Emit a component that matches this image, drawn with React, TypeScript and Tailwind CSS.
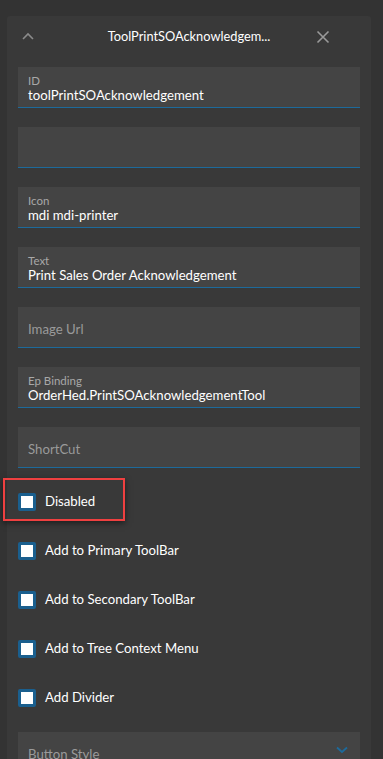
import React from "react";

const font = { fontFamily: "Lato, 'Noto Sans', sans-serif" };

function Field({ label, value, placeholder }: { label?: string; value?: string; placeholder?: string }) {
  return (
    <div className="h-[41px] bg-[#444444] border-b border-[#1d6a9b] pl-[10px] pr-[10px] flex flex-col">
      {label ? (
        <div className="flex flex-col pt-[7px]">
          <span className="text-[11.5px] leading-[13px] text-[#a8a8a8]">{label}</span>
          <span className="text-[13.2px] leading-[17px] text-white">{value}</span>
        </div>
      ) : placeholder ? (
        <span className="text-[13.2px] leading-[18px] text-[#9a9a9a] mt-[13px]">{placeholder}</span>
      ) : null}
    </div>
  );
}

function Check({ label }: { label: string }) {
  return (
    <div className="h-[49px] flex items-center">
      <div className="w-[18px] h-[18px] border-[3px] border-[#1a5f8e] bg-white rounded-[2px]" />
      <span className="ml-[9px] text-[13.2px] text-white">{label}</span>
    </div>
  );
}

export default function App() {
  return (
    <div className="w-[383px] h-[759px] bg-[#333333] overflow-hidden relative" style={font}>
      <div className="pl-[7px] pt-[16px]">
        <div className="w-[364px] h-[760px] bg-[#393939] rounded-[3px] px-[11px]">
          <div className="h-[42px] grid grid-cols-[50px_1fr_50px] items-center">
            <div className="flex justify-start pl-[3px]">
              <svg width="14" height="14" viewBox="0 0 14 14">
                <path d="M2 9 L7 4 L12 9" fill="none" stroke="#8a8a8a" strokeWidth="1.6" />
              </svg>
            </div>
            <div className="text-center text-[12.8px] text-white whitespace-nowrap">ToolPrintSOAcknowledgem...</div>
            <div className="flex justify-end pr-[29px]">
              <svg width="16" height="16" viewBox="0 0 16 16">
                <path d="M2.5 2.5 L13.5 13.5 M13.5 2.5 L2.5 13.5" stroke="#9a9a9a" strokeWidth="1.6" />
              </svg>
            </div>
          </div>
          <div className="mt-[9px] flex flex-col gap-[19px]">
            <Field label="ID" value="toolPrintSOAcknowledgement" />
            <Field />
            <Field label="Icon" value="mdi mdi-printer" />
            <Field label="Text" value="Print Sales Order Acknowledgement" />
            <Field placeholder="Image Url" />
            <Field label="Ep Binding" value="OrderHed.PrintSOAcknowledgementTool" />
            <Field placeholder="ShortCut" />
          </div>
          <div className="mt-[9px] flex flex-col">
            <Check label="Disabled" />
            <Check label="Add to Primary ToolBar" />
            <Check label="Add to Secondary ToolBar" />
            <Check label="Add to Tree Context Menu" />
            <Check label="Add Divider" />
          </div>
          <div className="mt-[10px] h-[41px] bg-[#444444] pl-[10px] pr-[12px] flex items-start justify-between">
            <span className="text-[13.2px] leading-[18px] text-[#9a9a9a] mt-[13px]">Button Style</span>
            <svg width="12" height="8" viewBox="0 0 12 8" className="mt-[14px]">
              <path d="M1 1.5 L6 6 L11 1.5" fill="none" stroke="#1d6a9b" strokeWidth="1.8" />
            </svg>
          </div>
        </div>
      </div>
      <div className="absolute left-[3px] top-[478px] w-[122px] h-[43px] border-[2.5px] border-[#ef4040] shadow-[0_2px_6px_rgba(0,0,0,0.5)]" />
    </div>
  );
}
